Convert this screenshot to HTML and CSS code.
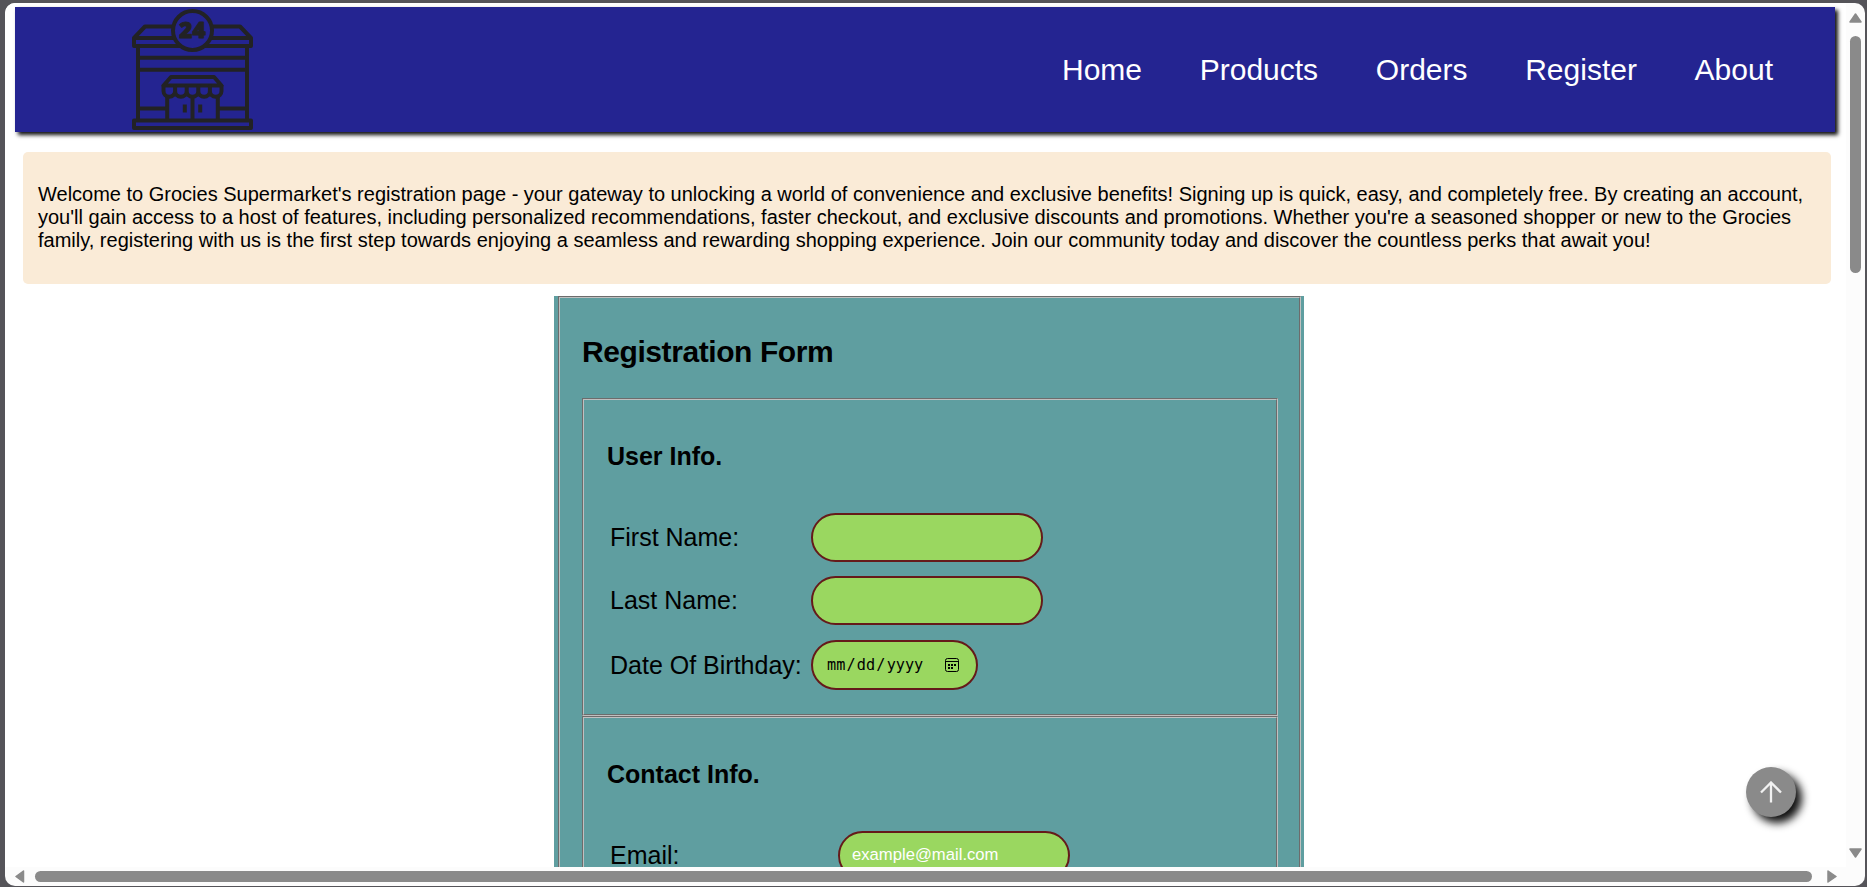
FILE: index.html
```html
<!DOCTYPE html>
<html lang="en">
<head>
<meta charset="utf-8">
<title>Grocies Supermarket - Register</title>
<link rel="stylesheet" href="styles.css">
</head>
<body>
<div class="window">
  <div class="viewport">
    <header class="header">
      <svg class="logo" viewBox="132 9 121 121" fill="none" stroke="#222224" stroke-width="4" stroke-linejoin="round">
        <path d="M174 26.5H145L134 38V46H181M211 26.5H240L251 38V46H204M134 38H176M209 38H251"/>
        <path d="M138 46V119M247 46V119M138 57.8H247M138 69.7H247"/>
        <circle cx="192.500" cy="30.500" r="19.500"/>
        <path d="M134 120.500H251V128H134Z"/>
        <path d="M171 77H214L221.500 85.500H163.500Z"/>
        <path d="M163.500 85V91a5.800 5.800 0 0 0 11.600 0V86V91a5.800 5.800 0 0 0 11.600 0V86V91a5.800 5.800 0 0 0 11.600 0V86V91a5.800 5.800 0 0 0 11.600 0V86V91a5.800 5.800 0 0 0 11.600 0V85"/>
        <path d="M167.200 97V119M217.800 97V119M192.500 97V119M138 108.500H167M218 108.500H247M184.800 104.500V112.500M200.200 104.500V112.500"/>
        <text class="logo-text" x="192.500" y="37.700" text-anchor="middle">24</text>
      </svg>
      <nav class="nav"><a>Home</a><a>Products</a><a>Orders</a><a>Register</a><a>About</a></nav>
    </header>
    <section class="intro"><p>Welcome to Grocies Supermarket's registration page - your gateway to unlocking a world of convenience and exclusive benefits! Signing up is quick, easy, and completely free. By creating an account, you'll gain access to a host of features, including personalized recommendations, faster checkout, and exclusive discounts and promotions. Whether you're a seasoned shopper or new to the Grocies family, registering with us is the first step towards enjoying a seamless and rewarding shopping experience. Join our community today and discover the countless perks that await you!</p></section>
    <form class="form">
      <div class="outer">
        <h2>Registration Form</h2>
        <div class="group user">
          <h3>User Info.</h3>
          <div class="row"><label>First Name:</label><input class="field" type="text"></div>
          <div class="row"><label>Last Name:</label><input class="field" type="text"></div>
          <div class="row date-row"><label>Date Of Birthday:</label>
            <div class="field date"><span class="mdy"><span>mm</span><span>/</span><span>dd</span><span>/</span><span>yyyy</span></span>
              <svg class="cal" viewBox="0 0 14 14" fill="none" stroke="#000"><rect x=".5" y=".5" width="13" height="13" rx="2"/><path d="M.5 3.500H13.500"/><path d="M3 7H11" stroke-width="2" stroke-dasharray="2 1"/><path d="M3 10H8" stroke-width="2" stroke-dasharray="2 1"/></svg>
            </div></div>
        </div>
        <div class="group contact">
          <h3>Contact Info.</h3>
          <div class="row"><label>Email:</label><input class="field" type="text" placeholder="example@mail.com"></div>
        </div>
      </div>
    </form>
  </div>
  <div class="vbar">
    <svg class="arrow" viewBox="0 0 13 10"><path d="M6.500 1L12 9H1Z"/></svg>
    <div class="vthumb"></div>
    <svg class="arrow down" viewBox="0 0 13 10"><path d="M1 1H12L6.500 9Z"/></svg>
  </div>
  <div class="hbar">
    <svg class="side" viewBox="0 0 10 13"><path d="M1 6.500L8.500 1V12Z"/></svg>
    <div class="hthumb"></div>
    <svg class="side" viewBox="0 0 10 13"><path d="M1 1L9 6.500L1 12Z"/></svg>
  </div>
  <button class="top-button" type="button"><svg viewBox="0 0 22 22" fill="none" stroke="#f1f1f1" stroke-width="2.300"><path d="M11 21.500V2M1 11.500L11 1.500L21 11.500"/></svg></button>
</div>
</body>
</html>
```
FILE: styles.css
```css
* { box-sizing: border-box; }
body { margin: 0; height: 887px; overflow: hidden; background: #555459; padding: 3px 2px 1px 5px; font-family: "Liberation Sans", Arial, sans-serif; color: #000; }
.window { position: relative; height: 883px; display: grid; grid-template: 864px 19px / 1841px 19px; background: #fcfcfc; border-radius: 10px; overflow: hidden; }
.viewport { background: #fff; overflow: hidden; padding: 4px 11px 0 10px; }
.header { height: 125px; display: flex; align-items: center; justify-content: space-between; padding: 0 62px 0 117px; background: #242491; box-shadow: 3px 3px 4px #111; }
.logo { width: 121px; height: 121px; display: block; }
.logo-text { font: 800 22.5px "Open Sans", sans-serif; fill: #222224; stroke-width: 1; }
.nav { display: flex; gap: 57.7px; color: #fff; font-size: 30px; }
.intro { margin: 20px 4px 0 8px; height: 132px; padding: 31px 15px 0; background: #faebd7; border-radius: 5px; font-size: 20px; line-height: 23px; }
.intro p { margin: 0; }
.form { margin: 12px 0 0 539px; width: 750px; height: 571px; padding: 0 3px 0 4px; background: #5f9ea0; }
.outer { height: 1200px; border: 2px groove #c0c0c0; padding: 36px 21px 0 22px; }
h2 { margin: 0; font-size: 30px; line-height: 35px; letter-spacing: -0.42px; }
.group { border: 2px groove #c0c0c0; padding: 0 23px; }
.user { margin-top: 29px; height: 318px; }
.contact { height: 500px; }
h3 { margin: 0; padding-top: 42px; height: 113px; font-size: 25px; line-height: 29px; }
.row { height: 49px; margin-bottom: 14px; padding-left: 3px; display: grid; grid-template-columns: 201px auto; align-items: center; justify-content: start; font-size: 25px; }
.date-row { height: 50px; margin-top: 15px; }
.contact .row { grid-template-columns: 228px auto; }
.field { width: 232px; height: 49px; border: 2px solid #651a1a; border-radius: 25px; background: #9ad760; padding: 0 12px; font: 16.67px "Liberation Sans", Arial, sans-serif; outline: 0; margin: 0; }
.contact .field { padding-bottom: 2px; }
.field::placeholder { color: #fff; opacity: 1; }
.date { width: 167px; height: 50px; display: flex; align-items: center; justify-content: space-between; padding: 0 17px 0 14px; font: 15.2px "DejaVu Sans Mono", monospace; }
.mdy { display: flex; gap: 1.2px; }
.cal { width: 14px; height: 14px; }
.vbar { display: flex; flex-direction: column; align-items: center; padding-top: 10px; }
.arrow { width: 13px; height: 10px; fill: #8a8a8a; stroke: #8a8a8a; stroke-width: 1.5; stroke-linejoin: round; }
.vthumb { width: 11px; height: 237px; margin-top: 13px; border-radius: 6px; background: #8a8a8a; }
.down { margin-top: 575px; }
.hbar { grid-column: 1 / 3; display: flex; align-items: center; padding-left: 10px; }
.side { width: 10px; height: 13px; fill: #8a8a8a; stroke: #8a8a8a; stroke-width: 1.5; stroke-linejoin: round; }
.hthumb { width: 1777px; height: 11px; margin: 0 15px 0 10px; border-radius: 6px; background: #8a8a8a; }
.top-button { position: absolute; left: 1741px; top: 764px; width: 50px; height: 50px; border: 0; border-radius: 50%; background: #8a8a8a; padding: 14px; box-shadow: 6px 6px 8px #111; }
.top-button svg { display: block; width: 22px; height: 22px; }
```
